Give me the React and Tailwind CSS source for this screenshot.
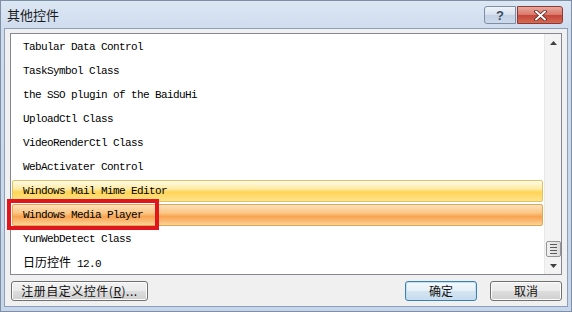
import React from "react";

const rows = [
    "Tabular Data Control",
    "TaskSymbol Class",
    "the SSO plugin of the BaiduHi",
    "UploadCtl Class",
    "VideoRenderCtl Class",
    "WebActivater Control",
    "Windows Mail Mime Editor",
    "Windows Media Player",
    "YunWebDetect Class",
    "日历控件 12.0",
];

const listFont = { fontFamily: '"Liberation Mono", "Noto Sans CJK SC", monospace' };
const uiFont = { fontFamily: '"Noto Sans CJK SC", "Liberation Sans", sans-serif' };

// one row of the list; hover/selected rows get the office-like gradient bar
const Row = ({ text, state }) => {
    let bar = "border border-transparent";
    if (state === "hover") {
        bar = "border border-[#e3c266] rounded-[2px] bg-[linear-gradient(to_bottom,#fffbe6_0%,#ffeaa4_40%,#ffd455_55%,#ffe28c_100%)]";
    }
    if (state === "selected") {
        bar = "border border-[#d9a954] rounded-[2px] bg-[linear-gradient(to_bottom,#fde0bb_0%,#fbc684_40%,#f8a350_58%,#fcd196_100%)]";
    }
    const cjk = /[\u4e00-\u9fff]/.test(text);
    return (
        <div className="h-6 flex items-center pl-[1px] pr-[1px]">
            <div className={`h-[22px] w-full flex items-center pl-[10px] text-[11px] tracking-[-0.6px] text-black ${bar}`}>
                {cjk ? (
                    <span>
                        <span className="text-[12px] tracking-normal" style={uiFont}>日历控件</span> 12.0
                    </span>
                ) : (
                    text
                )}
            </div>
        </div>
    );
};

const Button = ({ children, primary, className }) => (
    <div
        className={`h-[20px] flex items-center justify-center rounded-[3px] text-[12px] text-[#111] border ${
            primary
                ? "border-[#3c7fb1] bg-[linear-gradient(to_bottom,#f4f9fd_0%,#e6f0f8_48%,#d4e4f1_52%,#c9dcec_100%)] shadow-[inset_0_0_0_1px_#bfe0f5]"
                : "border-[#707070] bg-[linear-gradient(to_bottom,#f2f2f2_0%,#ebebeb_48%,#dddddd_52%,#cfcfcf_100%)] shadow-[inset_0_0_0_1px_#fcfcfc]"
        } ${className}`}
        style={uiFont}
    >
        {children}
    </div>
);

export default function App() {
    return (
        <div className="relative w-[572px] h-[312px] overflow-hidden bg-[linear-gradient(to_bottom,#dce7f4_0px,#cfdcee_28px,#c6d5ea_100%)] border border-[#7f8fa6]">
            {/* title bar */}
            <div className="h-[27px] flex items-center justify-between pl-[6px] pr-[8px]">
                <span className="text-[13px] text-[#1b1b1b] leading-none" style={uiFont}>其他控件</span>
                <div className="flex items-start self-start mt-[5px] gap-[1px]">
                    <div className="w-[32px] h-[18px] rounded-l-[3px] border border-[#7d8ea6] bg-[linear-gradient(to_bottom,#eef3f9_0%,#d7e1ee_50%,#c2d1e4_52%,#ccdaeb_100%)] flex items-center justify-center text-[13px] font-bold text-[#3a4a60] leading-none" style={{ fontFamily: '"Liberation Sans", sans-serif' }}>
                        ?
                    </div>
                    <div className="w-[46px] h-[18px] rounded-r-[3px] border border-[#8b3a35] bg-[linear-gradient(to_bottom,#e9a99c_0%,#d8786a_48%,#c4463a_52%,#d56a52_100%)] flex items-center justify-center">
                        <svg width="13" height="11" viewBox="0 0 13 11">
                            <path d="M2 1.5 L11 9.5 M11 1.5 L2 9.5" stroke="#5c1d18" strokeWidth="3.6" strokeLinecap="round" />
                            <path d="M2 1.5 L11 9.5 M11 1.5 L2 9.5" stroke="#ffffff" strokeWidth="2" strokeLinecap="round" />
                        </svg>
                    </div>
                </div>
            </div>

            {/* client area */}
            <div className="mx-[3px] h-[279px] bg-[#f0f0f0] border border-[#8c9fb8] pt-[4px] px-[5px]">
                <div className="h-[242px] bg-white border border-[#828790] flex">
                    <div className="flex-1 pt-[1px]" style={listFont}>
                        {rows.map((r, i) => (
                            <Row key={r} text={r} state={i === 6 ? "hover" : i === 7 ? "selected" : null} />
                        ))}
                    </div>
                    {/* scrollbar */}
                    <div className="w-[17px] bg-[#f3f3f3] border-l border-[#e8e8e8] flex flex-col items-center justify-between">
                        <div className="h-[17px] flex items-center justify-center">
                            <svg width="7" height="4" viewBox="0 0 7 4"><path d="M3.5 0 L7 4 L0 4 Z" fill="#404040" /></svg>
                        </div>
                        <div className="flex flex-col items-center">
                            <div className="w-[15px] h-[16px] rounded-[2px] border border-[#959595] bg-[linear-gradient(to_right,#f1f1f1,#dcdcdc)] flex flex-col items-center justify-center gap-[2px]">
                                <div className="w-[7px] h-[1px] bg-[#5a5a5a]" />
                                <div className="w-[7px] h-[1px] bg-[#5a5a5a]" />
                                <div className="w-[7px] h-[1px] bg-[#5a5a5a]" />
                                <div className="w-[7px] h-[1px] bg-[#5a5a5a]" />
                            </div>
                            <div className="h-[17px] flex items-center justify-center">
                                <svg width="7" height="4" viewBox="0 0 7 4"><path d="M0 0 L7 0 L3.5 4 Z" fill="#404040" /></svg>
                            </div>
                        </div>
                    </div>
                </div>

                {/* bottom buttons */}
                <div className="flex items-center mt-[6px] pl-[1px]">
                    <Button className="w-[137px] tracking-[0.5px]">注册自定义控件(<u>R</u>)...</Button>
                    <div className="flex-1" />
                    <Button primary className="w-[72px]">确定</Button>
                    <Button className="w-[72px] ml-[13px]">取消</Button>
                </div>
            </div>

            {/* red annotation frame */}
            <div className="absolute left-[6px] top-[198px] w-[152px] h-[31px] border-[4px] border-[#e0161c]" />
        </div>
    );
}
